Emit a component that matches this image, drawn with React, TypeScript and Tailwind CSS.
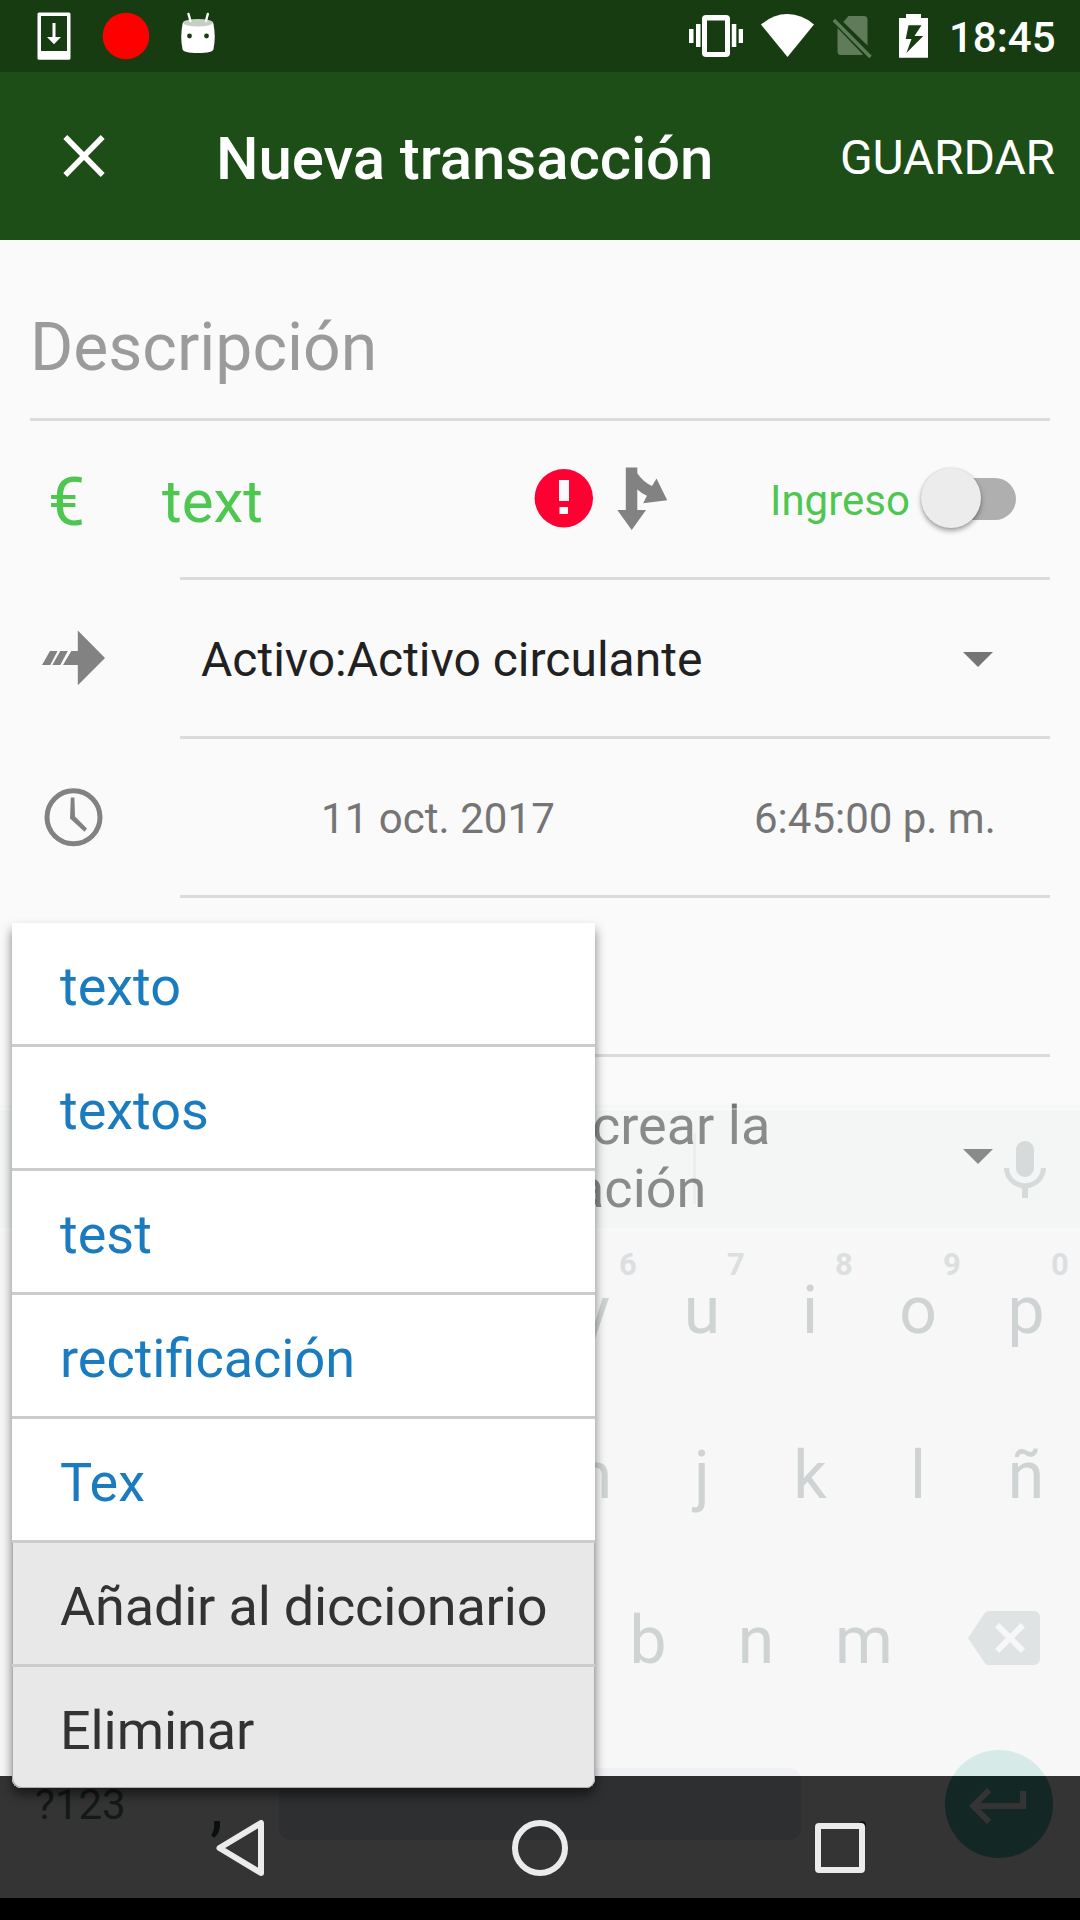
import React from "react";

const suggestions = ["texto", "textos", "test", "rectificación", "Tex"];
const topKeys = [
  { key: "y", hint: "6" },
  { key: "u", hint: "7" },
  { key: "i", hint: "8" },
  { key: "o", hint: "9" },
  { key: "p", hint: "0" },
];
const middleKeys = ["h", "j", "k", "l", "ñ"];
const bottomKeys = ["b", "n", "m"];

function StatusBar() {
  return (
    <div className="flex h-[72px] justify-between bg-[#173c12]">
      <svg width="240" height="72" viewBox="0 0 240 72">
        <path fill="#fff" fillRule="evenodd" d="M39 12.5H69a1.5 1.5 0 0 1 1.500 1.500V58.500a1.500 1.500 0 0 1-1.500 1.200H39a1.500 1.500 0 0 1-1.500-1.200V14a1.500 1.500 0 0 1 1.500-1.500zM41 16V51H67V16z" />
        <path fill="#fff" d="M52.500 23h3V37H61L54 44.300 47 37h5.500z" />
        <circle cx="126" cy="36" r="23.300" fill="#f00" />
        <path fill="#fff" d="M182.500 24Q183 21 186 21H210Q213 21 213.500 24Q216 37 213.500 49Q213 53 198 53T182.500 49Q180 37 182.500 24z" />
        <ellipse cx="198" cy="22.800" rx="14.800" ry="3.800" fill="#c5cfc4" />
        <path stroke="#fff" strokeWidth="2.400" strokeLinecap="round" d="M188.500 14L190.500 21M207.800 14L206 21" />
        <circle cx="189.500" cy="36" r="2.400" fill="#173c12" />
        <circle cx="206.500" cy="36" r="2.400" fill="#173c12" />
      </svg>
      <div className="flex items-center">
        <svg width="262" height="72" viewBox="680 0 262 72">
          <path fill="#fff" fillRule="evenodd" d="M706 15H726a4 4 0 0 1 4 4V53a4 4 0 0 1-4 4H706a4 4 0 0 1-4-4V19a4 4 0 0 1 4-4zM707 20.500V52H725V20.500z" />
          <path fill="#fff" d="M689 29h4.500v14H689zM696 24h4.500v23H696zM731.800 24h4.500v23h-4.500zM738.700 29h4.300v14h-4.300z" />
          <path fill="#fff" d="M761 24.500Q773 14 787.500 14T814 24.500L787.500 57z" />
          <path fill="#5f7b5a" d="M843.300 22L848.500 16H864Q867.500 16 867.500 19.500V45.500zM837.500 28L863 54.500Q862.500 55 860 55H841Q837.500 55 837.500 51.500z" />
          <path stroke="#5f7b5a" strokeWidth="3.500" d="M833.800 20L870.500 57" />
          <path fill="#fff" fillRule="evenodd" d="M899 18H906V14H921V18H928V57.700H899zM908.500 25.300L905.700 39H911.500L906.400 53L923.300 36H914.500L921.500 25.300z" />
        </svg>
        <span className="w-[138px] pt-[4px] pl-[7px] text-[42px] leading-none font-medium text-white">18:45</span>
      </div>
    </div>
  );
}

function AppBar() {
  return (
    <div className="flex h-[168px] items-center bg-[#1d4e17] pr-[25px] pl-[60px] text-white">
      <svg width="48" height="48" viewBox="0 0 48 48" stroke="#fff" strokeWidth="5.500">
        <path d="M5.300 5L42.700 43M42.700 5L5.300 43" />
      </svg>
      <h1 className="flex-1 pt-[5px] pl-[108px] text-[60px] leading-none font-medium tracking-[-0.08px]">Nueva transacción</h1>
      <button className="pt-[3px] text-[48px] leading-none tracking-[-0.15px]">GUARDAR</button>
    </div>
  );
}

function Row({ icon, children }: { icon?: React.ReactNode; children?: React.ReactNode }) {
  return (
    <div className="flex h-[159px]">
      <div className="flex w-[150px] items-center pb-[3px]">{icon}</div>
      <div className="flex flex-1 items-center border-b-[3px] border-[#dbdbdb]">{children}</div>
    </div>
  );
}

function Caret() {
  return (
    <svg width="30" height="15" viewBox="0 0 30 15">
      <path fill="#757575" d="M0 0H30L15 15z" />
    </svg>
  );
}

function Form() {
  return (
    <div className="flex flex-col px-[30px]">
      <div className="flex h-[181px] items-center border-b-[3px] border-[#dbdbdb] pt-[37px] text-[66px] leading-none text-[#9b9b9b]">
        Descripción
      </div>

      <Row icon={<span className="pt-[7px] pl-[18px] text-[66px] leading-none text-[#4ec751]">€</span>}>
        <span className="-ml-[18px] w-[372px] pt-[5px] text-[60px] leading-none text-[#4ec751]">text</span>
        <svg width="60" height="60" viewBox="0 0 60 60">
          <circle cx="29.800" cy="29.200" r="29.200" fill="#ff0033" />
          <path fill="#fafafa" d="M25 11h10v21H25zM25.500 38h8.500v7h-8.500z" />
        </svg>
        <svg className="ml-[22px]" width="54" height="64" viewBox="616 467 54 64">
          <path fill="#828282" d="M625.800 467.600H637.300V473.300Q643 482 652 486L656.500 478.500L667.200 500.300L643.200 503.300L646.900 495.700Q641 493 637.300 489.500V510H646L631.700 530L617.300 510H625.800z" />
        </svg>
        <span className="ml-[100px] pt-[3px] text-[42px] leading-none text-[#4ec751]">Ingreso</span>
        <div className="relative ml-auto flex h-[60px] w-[96px] items-center">
          <div className="ml-[12px] h-[42px] w-[84px] rounded-full bg-[#afafaf]" />
          <div className="absolute top-[-1px] left-[1px] size-[60px] rounded-full bg-[#ececec] shadow-[0_3px_5px_rgba(0,0,0,0.35),0_0_2px_rgba(0,0,0,0.15)]" />
        </div>
        <div className="w-[34px]" />
      </Row>

      <Row
        icon={
          <svg className="ml-[10px]" width="68" height="60" viewBox="40 628 68 60">
            <path fill="#828282" d="M77.800 630.500L105 658L77.800 685.200V665H63L71.300 651H77.800zM60.300 651h7.500L60.300 665h-8zM50 651h7.500L50.300 665H42z" />
          </svg>
        }
      >
        <span className="flex-1 pt-[3px] pl-[21px] text-[48px] leading-none text-[#212121]">Activo:Activo circulante</span>
        <div className="mt-[2px] flex w-[87px]"><Caret /></div>
      </Row>

      <Row
        icon={
          <svg className="ml-[12px]" width="63" height="60" viewBox="42 787 63 60">
            <circle cx="73.500" cy="817.200" r="26.500" fill="none" stroke="#828282" strokeWidth="5" />
            <path fill="#828282" d="M70.800 797.500H74.400L75 816.500L87 828.500L84.500 831.800L70 818.500z" />
          </svg>
        }
      >
        <span className="w-[574px] pt-[3px] pl-[141px] text-[42px] leading-none tracking-[0.05px] text-[#757575]">11 oct. 2017</span>
        <span className="pt-[3px] text-[42px] leading-none whitespace-nowrap text-[#757575]">6:45:00 p. m.</span>
      </Row>

      <Row />

      <div className="flex h-[200px] items-center pl-[562px]">
        <div className="flex w-[371px] flex-col text-[54px] leading-[63px] text-[#757575]">
          <span>crear la</span>
          <span className="-ml-[17px]">ación</span>
        </div>
        <div className="mb-[2px] flex"><Caret /></div>
      </div>
    </div>
  );
}

function Keyboard() {
  return (
    <div className="absolute inset-x-0 top-[1102px] flex flex-col text-[66px] leading-none text-[#cfd3d4]">
      <div className="h-[6px] bg-linear-to-b from-transparent to-black/2" />
      <div className="flex h-[120px] items-center justify-end border-t-2 border-[#f7f8f8]/40 bg-[rgba(220,230,228,0.2)] bg-clip-padding pr-[19px]">
        <div className="mr-[293px] mb-[1px] h-[71px] w-[3px] bg-black/3" />
        <svg className="mb-[-4px]" width="72" height="72" viewBox="0 0 24 24">
          <path fill="#d7dadb" d="M12 14c1.660 0 2.990-1.340 2.990-3L15 5c0-1.660-1.340-3-3-3S9 3.340 9 5v6c0 1.660 1.340 3 3 3zm5.300-3c0 3-2.540 5.100-5.300 5.100S6.700 14 6.700 11H5c0 3.410 2.720 6.230 6 6.720V21h2v-3.280c3.280-.48 6-3.300 6-6.720h-1.700z" />
        </svg>
      </div>
      <div className="h-[548px] border-t-[3px] border-[#f9f9f9] bg-[#f7f7f7]">
        <div className="-mt-[3px] grid h-[165px] grid-cols-5 pl-[540px]">
          {topKeys.map(({ key, hint }) => (
            <div key={key} className="relative flex items-center justify-center">
              {key}
              <span className="absolute top-[21px] left-[78px] w-[20px] text-center text-[31px] leading-[31px] font-bold text-[#dcdfe0]">{hint}</span>
            </div>
          ))}
        </div>
        <div className="grid h-[165px] grid-cols-5 pl-[540px]">
          {middleKeys.map((key) => (
            <div key={key} className="flex items-center justify-center">{key}</div>
          ))}
        </div>
        <div className="flex h-[165px] items-center pl-[594px]">
          {bottomKeys.map((key) => (
            <div key={key} className="w-[108px] text-center">{key}</div>
          ))}
          <svg className="mt-[-5px] ml-[50px]" width="72" height="72" viewBox="0 0 24 24">
            <path fill="#dfe3e4" d="M22 3H7c-.69 0-1.230.35-1.590.88L0 12l5.410 8.110c.36.53.9.89 1.590.89h15c1.100 0 2-.9 2-2V5c0-1.100-.9-2-2-2zm-3 12.590L17.590 17 14 13.410 10.410 17 9 15.590 12.590 12 9 8.410 10.410 7 14 10.590 17.590 7 19 8.410 15.410 12 19 15.590z" />
          </svg>
        </div>
        <div className="relative h-[53px] overflow-hidden">
          <div className="absolute top-[45px] left-[279px] h-[72px] w-[522px] rounded-[12px] bg-[#f0f1f5]" />
          <div className="absolute top-[27px] left-[945px] size-[108px] rounded-full bg-[#d6ebe8]" />
        </div>
      </div>
    </div>
  );
}

function NavigationBar() {
  return (
    <div className="absolute inset-x-0 top-[1776px] h-[144px] border-b-[22px] border-black bg-[#343434]">
      <div className="relative h-[122px]">
        <div className="absolute top-0 left-[279px] h-[64px] w-[522px] rounded-b-[12px] bg-[#2e2f31]" />
        <div className="absolute top-0 left-[945px] h-[82px] w-[108px] overflow-hidden">
          <div className="mt-[-26px] size-[108px] rounded-full bg-[#132725]" />
        </div>
        <svg className="absolute top-[-6px] left-[963px]" width="72" height="72" viewBox="0 0 24 24">
          <path fill="#343434" d="M19 7v4H5.830l3.580-3.590L8 6l-6 6 6 6 1.410-1.410L5.830 13H21V7z" />
        </svg>
        <span className="absolute top-[8px] left-[35px] text-[42px] leading-[42px] text-[#131818]">?123</span>
        <span className="absolute top-[-3px] left-[210px] text-[66px] leading-[66px] text-[#0c0f0f]">,</span>
        <span className="absolute top-[-3px] left-[854px] text-[66px] leading-[66px] text-[#0c0f0f]">.</span>
        <div className="absolute inset-x-0 top-[44px] flex h-[56px] items-center justify-between pr-[215px] pl-[216px]">
          <svg width="48" height="56" viewBox="0 0 48 56">
            <path fill="none" stroke="#ebebeb" strokeWidth="6" strokeLinejoin="round" d="M45 3V53L3.500 28z" />
          </svg>
          <div className="ml-px size-[56px] rounded-full border-[6px] border-[#ebebeb]" />
          <div className="size-[50px] rounded-[4px] border-[6px] border-[#ebebeb] bg-[#343434]" />
        </div>
      </div>
    </div>
  );
}

function SuggestionMenu() {
  return (
    <div className="absolute top-[923px] left-[12px] flex w-[583px] flex-col rounded-b-[9px] bg-white text-[54px] leading-none shadow-[0_7px_11px_rgba(0,0,0,0.5)]">
      {suggestions.map((word) => (
        <div key={word} className="flex h-[124px] items-center border-b-[3px] border-[#cccccc] pt-[6px] pl-[48px] text-[#1a7bbf]">
          {word}
        </div>
      ))}
      <div className="flex flex-col rounded-b-[9px] bg-[#e8e8e8] text-[#323232] shadow-[inset_1px_-1px_0_#adadad,inset_-1px_0_0_#adadad]">
        <div className="flex h-[124px] items-center border-b-[3px] border-[#cccccc] pt-[6px] pl-[48px] tracking-[-0.18px]">Añadir al diccionario</div>
        <div className="flex h-[121px] items-center pt-[6px] pl-[48px] tracking-[-0.1px]">Eliminar</div>
      </div>
    </div>
  );
}

export default function App() {
  return (
    <div className="relative h-[1920px] w-[1080px] overflow-hidden bg-[#fafafa] font-['Roboto',sans-serif]">
      <StatusBar />
      <AppBar />
      <Form />
      <Keyboard />
      <NavigationBar />
      <SuggestionMenu />
    </div>
  );
}
